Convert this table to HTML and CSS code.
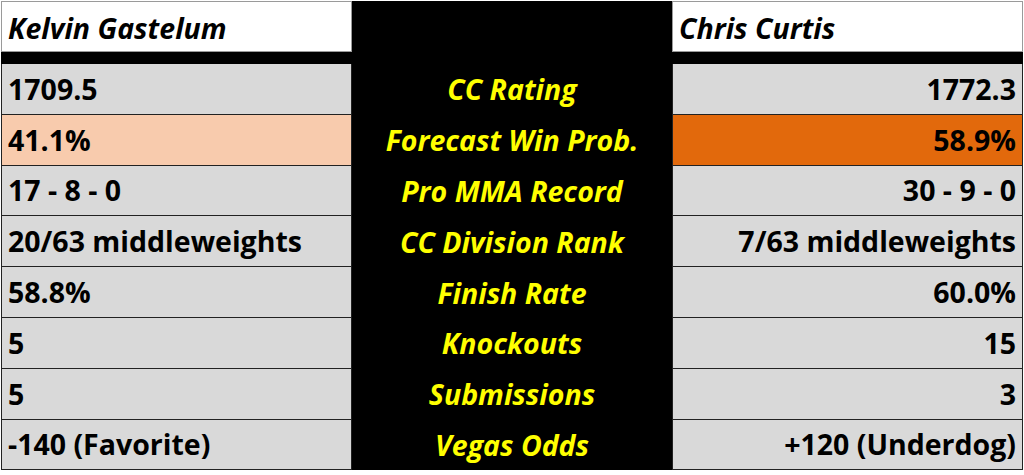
FILE: index.html
```html
<!DOCTYPE html>
<html>
<head>
<meta charset="utf-8">
<link rel="stylesheet" href="styles.css">
</head>
<body>
<div class="sheet">
  <div class="cell head left">Kelvin Gastelum</div>
  <div class="cell mid"></div>
  <div class="cell head">Chris Curtis</div>

  <div class="gap"></div>

  <div class="cell left">1709.5</div>
  <div class="cell mid">CC Rating</div>
  <div class="cell right">1772.3</div>

  <div class="cell left peach">41.1%</div>
  <div class="cell mid">Forecast Win Prob.</div>
  <div class="cell right orange">58.9%</div>

  <div class="cell left">17 - 8 - 0</div>
  <div class="cell mid">Pro MMA Record</div>
  <div class="cell right">30 - 9 - 0</div>

  <div class="cell left">20/63 middleweights</div>
  <div class="cell mid">CC Division Rank</div>
  <div class="cell right">7/63 middleweights</div>

  <div class="cell left">58.8%</div>
  <div class="cell mid">Finish Rate</div>
  <div class="cell right">60.0%</div>

  <div class="cell left">5</div>
  <div class="cell mid">Knockouts</div>
  <div class="cell right">15</div>

  <div class="cell left">5</div>
  <div class="cell mid">Submissions</div>
  <div class="cell right">3</div>

  <div class="cell left">-140 (Favorite)</div>
  <div class="cell mid">Vegas Odds</div>
  <div class="cell right">+120 (Underdog)</div>
</div>
</body>
</html>
```
FILE: styles.css
```css
html, body {
  margin: 0;
  padding: 0;
  background: #ffffff;
}

.sheet {
  margin: 1px 0 0 1px;
  width: 1022px;
  display: grid;
  grid-template-columns: 351px 320px 351px;
  grid-template-rows: 51px 12px repeat(8, 50.8px);
  background: #000000;
  font-family: "Open Sans", "Liberation Sans", sans-serif;
  font-weight: 700;
  font-size: 28.5px;
  color: #000000;
}

.cell {
  display: flex;
  align-items: center;
  padding: 0 6px;
  background: #d9d9d9;
  border: 1px solid #222222;
  border-top: none;
  white-space: nowrap;
  overflow: hidden;
}

.head {
  background: #ffffff;
  font-style: italic;
  border: 1px solid #9a9a9a;
  padding-top: 2px;
}

.left {
  justify-content: flex-start;
}

.right {
  justify-content: flex-end;
}

.mid {
  background: #000000;
  border: none;
  color: #ffff00;
  font-style: italic;
  justify-content: center;
  padding: 0;
}

.gap {
  grid-column: 1 / 4;
  background: #000000;
}

.peach {
  background: #f8cbad;
}

.orange {
  background: #e2690c;
}
```
